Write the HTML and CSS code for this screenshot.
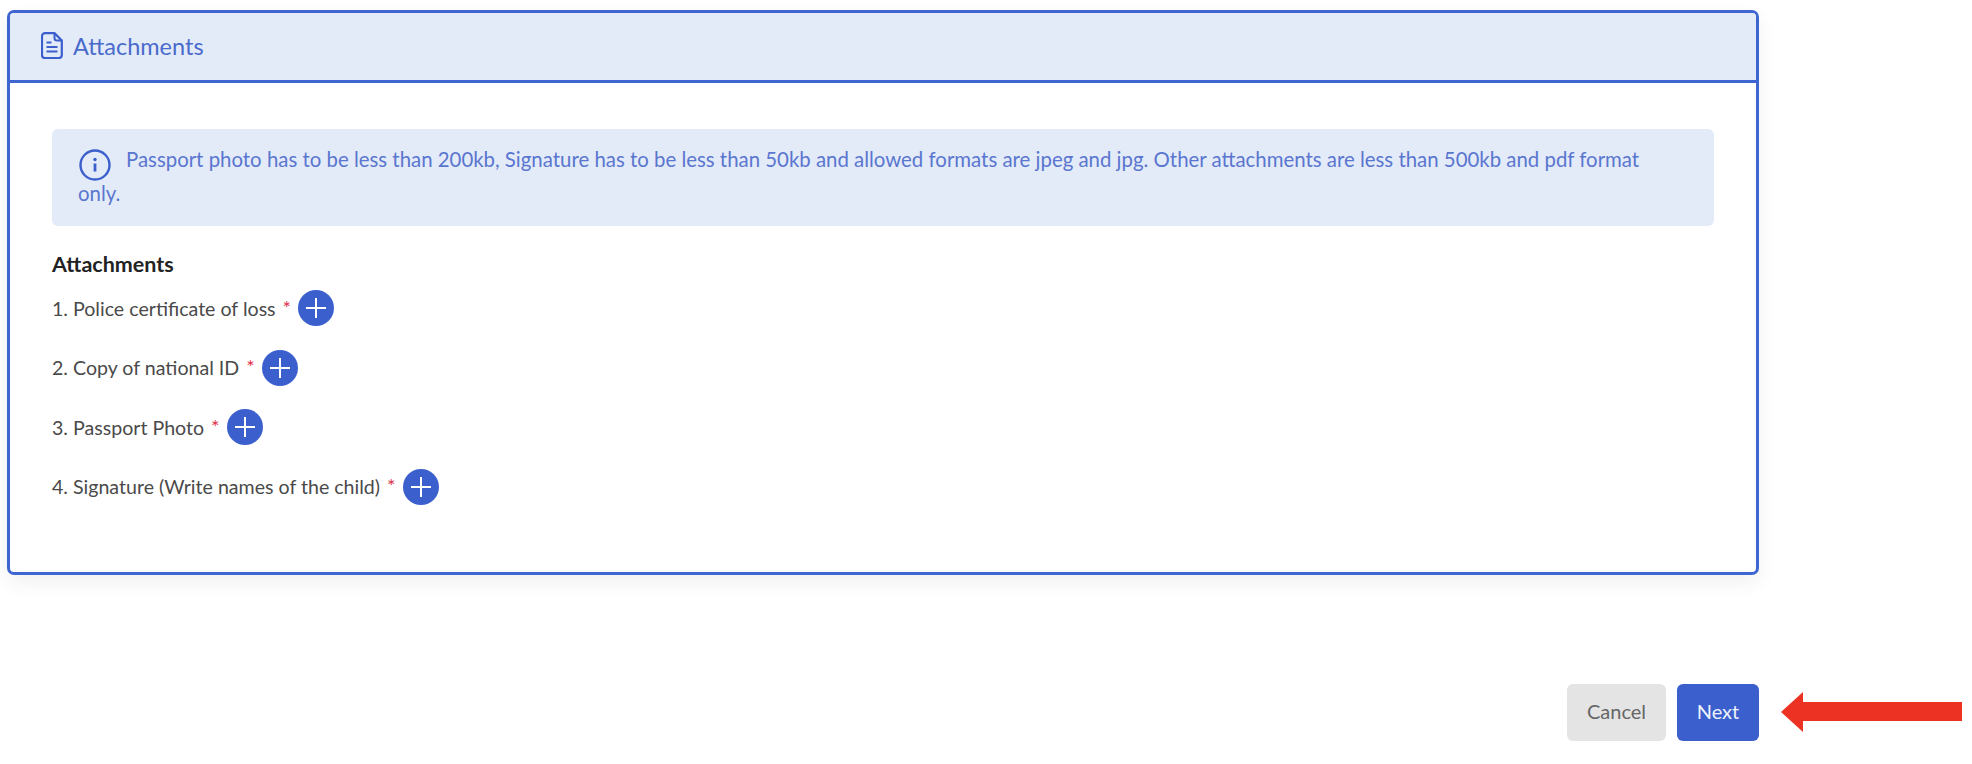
FILE: index.html
```html
<!DOCTYPE html>
<html lang="en">
<head>
    <meta charset="UTF-8">
    <meta name="viewport" content="width=device-width, initial-scale=1.0">
    <title>Attachments</title>
    <link rel="stylesheet" href="styles.css">
</head>
<body>
    <div class="page">
        <section class="card">
            <header class="card-header">
                <svg class="doc-icon" viewBox="0 0 22 27" width="22" height="27">
                    <path d="M4 1.2h9.5L20.8 8.5V23a3 3 0 0 1-3 3H4a3 3 0 0 1-3-3V4.2a3 3 0 0 1 3-3z" fill="none" stroke="#3b5fcc" stroke-width="2.2"/>
                    <path d="M13.5 1.2V6a2.5 2.5 0 0 0 2.5 2.5h4.8" fill="none" stroke="#3b5fcc" stroke-width="2"/>
                    <path d="M5.5 10.5h5M5.5 15h11M5.5 19.5h11" fill="none" stroke="#3b5fcc" stroke-width="2"/>
                </svg>
                <span>Attachments</span>
            </header>
            <div class="card-body">
                <div class="alert">
                    <svg class="info-icon" viewBox="0 0 32 32" width="32" height="32">
                        <circle cx="16" cy="16" r="14.5" fill="none" stroke="#3b5fcc" stroke-width="2.4"/>
                        <circle cx="16" cy="10.5" r="1.7" fill="#3b5fcc"/>
                        <path d="M16 14.5v8" stroke="#3b5fcc" stroke-width="2.8"/>
                    </svg>Passport photo has to be less than 200kb, Signature has to be less than 50kb and allowed formats are jpeg and jpg. Other attachments are less than 500kb and pdf format only.
                </div>
                <h2 class="list-title">Attachments</h2>
                <div class="row">1. Police certificate of loss <span class="req">*</span><button class="add" aria-label="Add"></button></div>
                <div class="row">2. Copy of national ID <span class="req">*</span><button class="add" aria-label="Add"></button></div>
                <div class="row">3. Passport Photo <span class="req">*</span><button class="add" aria-label="Add"></button></div>
                <div class="row">4. Signature (Write names of the child) <span class="req">*</span><button class="add" aria-label="Add"></button></div>
            </div>
        </section>
        <div class="actions">
            <button class="btn btn-cancel">Cancel</button>
            <button class="btn btn-next">Next</button>
            <svg class="arrow" viewBox="0 0 181 40" width="181" height="40">
                <path d="M0 20L22 0V10H181V29H22V40z" fill="#ec3323"/>
            </svg>
        </div>
    </div>
</body>
</html>
```
FILE: styles.css
```css
body {
    margin: 0;
    background-color: #fff;
    font-family: Lato, Arial, sans-serif;
    font-size: 19.6px;
    color: #4a4a4a;
}
.page {
    width: 1752px;
    padding: 10px 0 0 7px;
}
.card {
    border: 3px solid #3f66d0;
    border-radius: 7px;
    height: 565px;
    box-sizing: border-box;
    box-shadow: 0 8px 20px rgba(0, 0, 0, 0.06);
}
.card-header {
    display: flex;
    align-items: center;
    gap: 10px;
    height: 70px;
    box-sizing: border-box;
    padding: 0 0 2px 31px;
    background-color: #e3ebf9;
    border-bottom: 3px solid #3f66d0;
    border-radius: 4px 4px 0 0;
    color: #4a6bcb;
    font-size: 23.5px;
}
.card-body {
    padding: 46px 42px 0;
}
.alert {
    height: 97px;
    box-sizing: border-box;
    padding: 13px 50px 0 26px;
    background-color: #e3ebf9;
    border-radius: 6px;
    color: #5a76cf;
    font-size: 20.4px;
    line-height: 34px;
}
.info-icon {
    vertical-align: -9px;
    margin: 0 15px -5px 1px;
}
.list-title {
    margin: 26px 0 14px;
    font-size: 21.5px;
    font-weight: 700;
    line-height: 24px;
    color: #222;
}
.row {
    display: flex;
    align-items: center;
    gap: 7px;
    height: 36px;
    margin-bottom: 23.5px;
}
.req {
    color: #e0324a;
    font-size: 20px;
    margin-top: -3px;
}
.add {
    position: relative;
    width: 36px;
    height: 36px;
    padding: 0;
    border: none;
    border-radius: 50%;
    background-color: #3b5fcc;
}
.add::before,
.add::after {
    content: "";
    position: absolute;
    left: 8px;
    top: 17px;
    width: 20px;
    height: 2px;
    background-color: #fff;
}
.add::after {
    transform: rotate(90deg);
}
.actions {
    position: relative;
    display: flex;
    justify-content: flex-end;
    gap: 11px;
    margin-top: 109px;
}
.btn {
    height: 57px;
    padding: 0 0 3px;
    border: none;
    border-radius: 6px;
    font-family: inherit;
    font-size: 20px;
}
.btn-cancel {
    width: 99px;
    background-color: #e4e4e4;
    color: #666;
}
.btn-next {
    width: 82px;
    background-color: #3b5fcc;
    color: #eef2fb;
}
.arrow {
    position: absolute;
    left: calc(100% + 22px);
    top: 8px;
}
```
